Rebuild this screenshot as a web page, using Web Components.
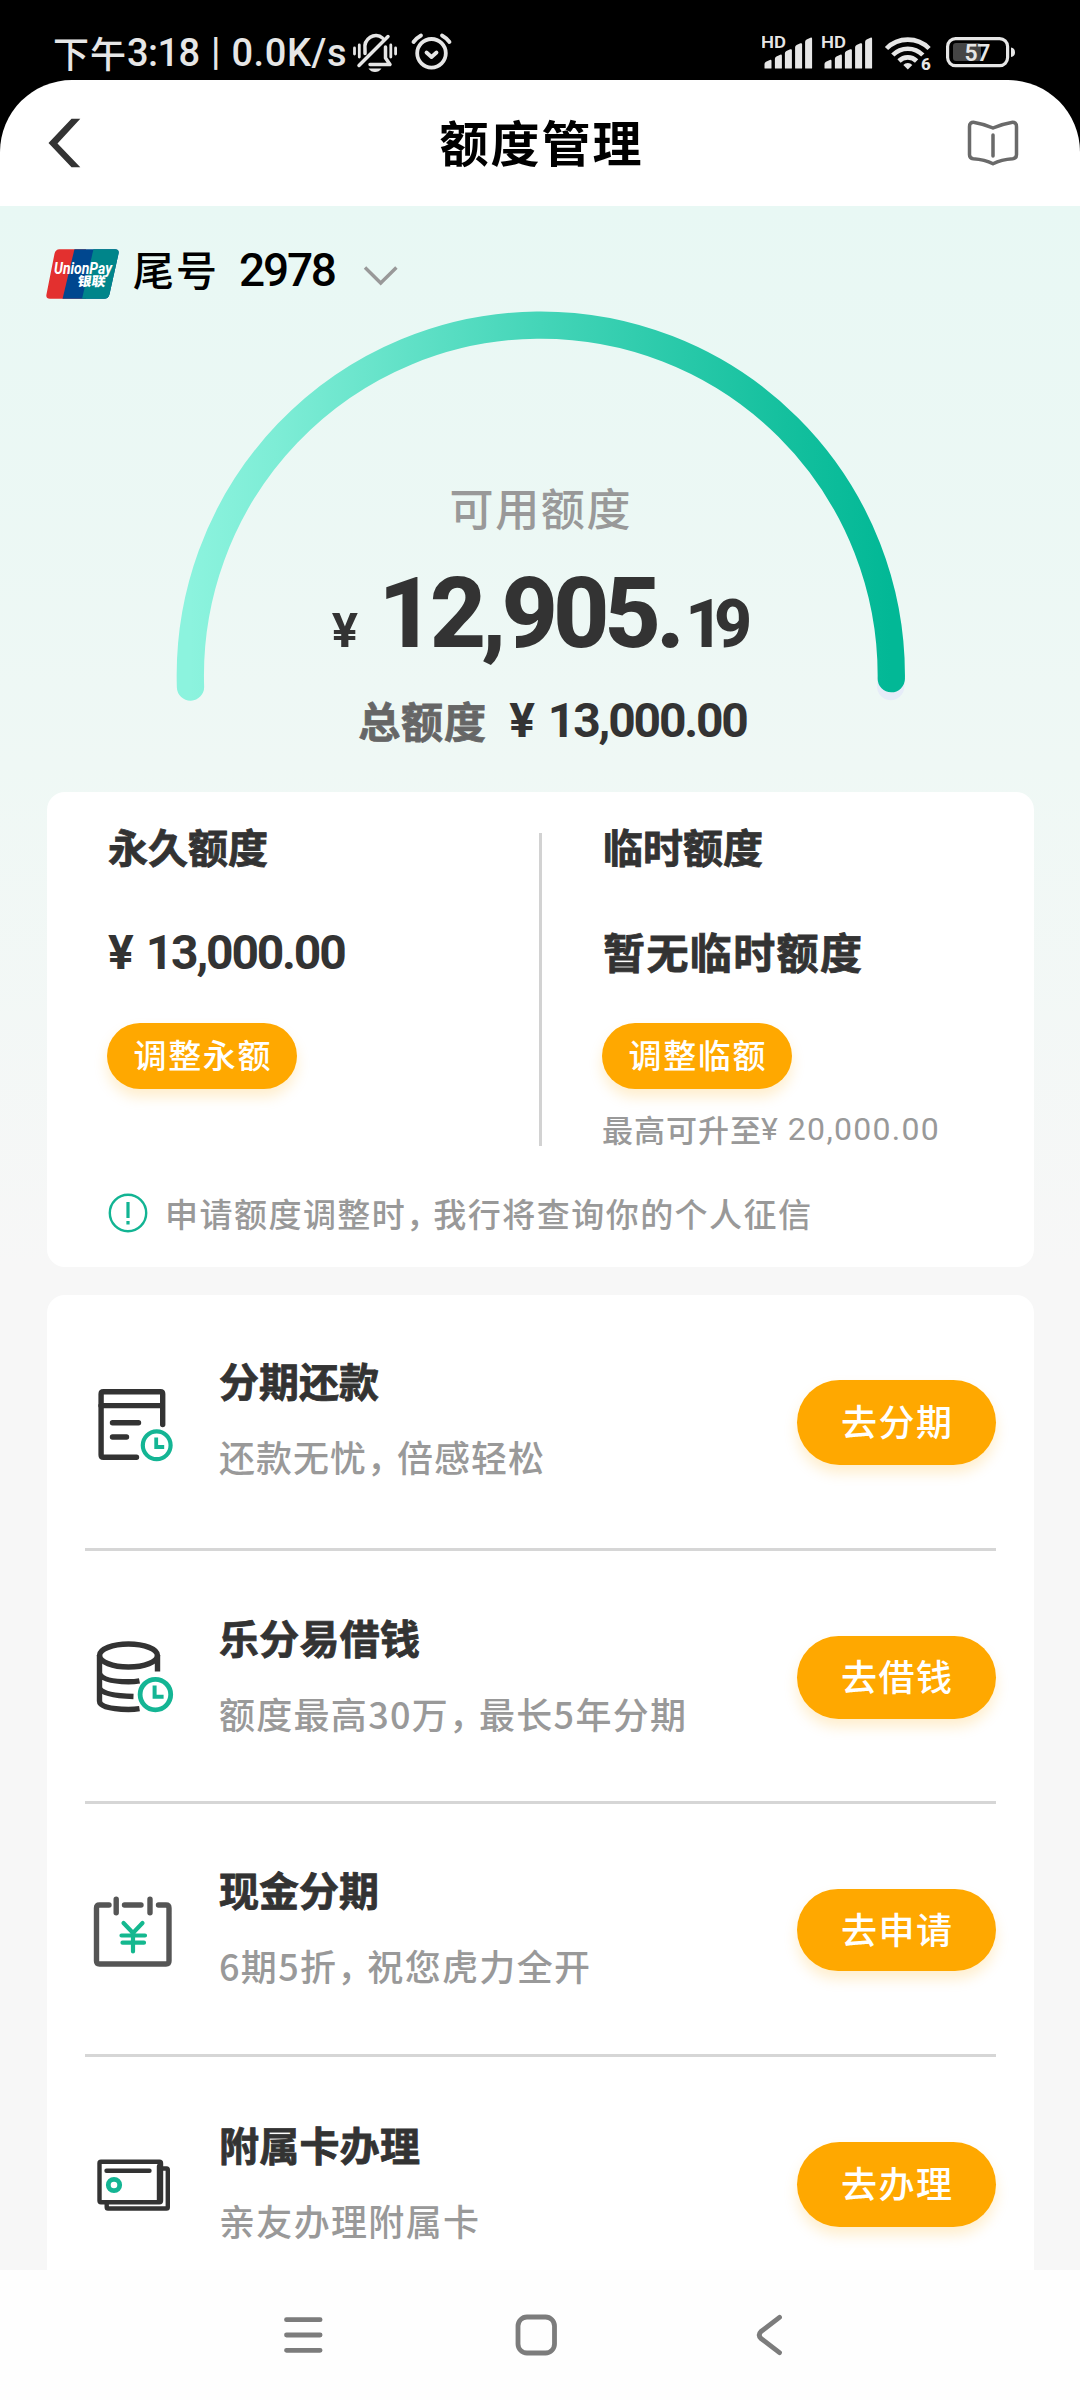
<!DOCTYPE html>
<html lang="zh-CN">
<head>
<meta charset="utf-8">
<title>额度管理</title>
<style>
html,body{margin:0;padding:0;background:#fff}
body{width:1080px;height:2400px;overflow:hidden;font-family:Roboto,"Noto Sans CJK SC",sans-serif;color:#333}
</style>
</head>
<body>
<limit-page></limit-page>
<script>
const CJK = '"Noto Sans CJK SC",sans-serif';
const NUM = 'Roboto,"Noto Sans CJK SC",sans-serif';
const pendingFit = [];

function define(name, css, html) {
  customElements.define(name, class extends HTMLElement {
    constructor() {
      super();
      const root = this.attachShadow({ mode: 'open' });
      root.innerHTML = `<style>:host{display:block;box-sizing:border-box}*{box-sizing:border-box}svg{display:block;flex:none}.k{letter-spacing:-6px}${css}</style>` +
        (typeof html === 'function' ? html(this) : html);
    }
  });
}

/* Single line of text tracked out (or in) to the width given in "w". */
customElements.define('fit-text', class extends HTMLElement {
  constructor() {
    super();
    this.attachShadow({ mode: 'open' }).innerHTML =
      `<style>:host{display:block;white-space:pre;flex:none;width:max-content}:host([num]){font-family:${NUM}}:host(:not([num])){font-family:${CJK}}:host([heavy]){-webkit-text-stroke:.8px currentColor}</style><slot></slot>`;
    pendingFit.push(this);
  }
  fit() {
    const w = +this.getAttribute('w');
    if (!w) return;
    const natural = this.getBoundingClientRect().width;
    const n = [...this.textContent].length - this.querySelectorAll('.k').length;
    this.style.letterSpacing = ((w - natural) / Math.max(1, n - 1)).toFixed(3) + 'px';
    this.style.width = w + 'px';
  }
});

const bars = x => [[0,60],[10.4,54.7],[20.4,49.3],[30.6,43.3],[40.6,37.7]]
  .map(([d, t]) => `<path d="M${x+d} 68V${t+4}q0-1.5 1.5-2.2l3.8-1.8q1.7-.6 1.7 1V68q0 .5-.6.5h-5.8q-.6 0-.6-.5z"/>`).join('');

define('status-bar', `
  :host{height:80px;background:#000;color:#e6e6e6;display:flex;padding:0 54px 0 53px}
  .l{display:flex;height:106px;align-items:center;font-size:36px;font-weight:500;line-height:50px}
  .l fit-text[num]{font-size:38px;margin-top:-1px}
  text{font-family:${NUM};font-weight:600}`,
 `<div class="l"><fit-text w="73" style="margin-top:-3px">下午</fit-text><fit-text num w="73" style="margin-left:1px">3:18</fit-text><fit-text num style="margin:-3px 0 0 11px">|</fit-text><fit-text num w="115" style="margin-left:11px">0.0K/s</fit-text>
   <svg width="110" height="50" viewBox="350 28 110 50" fill="none" stroke="#e6e6e6" stroke-width="3.5" stroke-linecap="round" stroke-linejoin="round" style="margin-left:3px">
    <path d="M366 53.500V49.500a11 12 0 0 1 17.500-11.500M386.500 47v11l4.500 6.500H371M389 36.500L360 65.500"/><path d="M369.500 68.500h13q-2.500 3.500-6.500 3.500t-6.500-3.500z" fill="#e6e6e6" stroke="none"/>
    <path d="M355.500 48v6M360.300 45v12M391.800 45v12M396.600 48v6" stroke-width="2.800"/>
    <circle cx="432.500" cy="53.300" r="14.300" stroke-width="3.800"/><path d="M427.500 52.500l5 4.500 5-4.500" stroke-width="3.800"/><path d="M414.500 42q3-4 7.500-6.500M450.500 42q-3-4-7.500-6.500" stroke-width="3.800"/>
   </svg></div>
  <svg width="264" height="80" viewBox="762 0 264 80" fill="#e6e6e6" style="margin-left:auto">
   <text x="761" y="48" font-size="17" textLength="25" lengthAdjust="spacingAndGlyphs">HD</text><text x="821" y="48" font-size="17" textLength="25" lengthAdjust="spacingAndGlyphs">HD</text>
   ${bars(764.5)}${bars(824.5)}
   <g fill="none" stroke="#e6e6e6" stroke-width="4.600"><path d="M886.500 48.500a30 30 0 0 1 42.600 0"/><path d="M892.800 55a21 21 0 0 1 30 0"/><path d="M899 61a12.500 12.500 0 0 1 17.600 0"/></g>
   <path d="M903.300 65a6 6 0 0 1 9 0l-4.500 4.500z"/>
   <text x="921" y="70" font-size="17" style="font-weight:800" stroke="#000" stroke-width="3" paint-order="stroke">6</text>
   <rect x="953" y="43" width="28" height="18" rx="3" fill="#454545"/>
   <rect x="947.600" y="38.600" width="60" height="27" rx="8" fill="none" stroke="#e6e6e6" stroke-width="3.200"/>
   <path d="M1011 47.500q4 .5 4 4.800t-4 4.800z"/>
   <text x="964.500" y="61" font-size="23" textLength="26">57</text>
  </svg>`);

define('app-header', `
  :host{height:126px;background:#000}
  .in{height:126px;background:#fff;border-radius:72px 72px 0 0;display:flex;justify-content:space-between;align-items:center;padding:0 61px 0 48px}
  fit-text{font-size:49px;font-weight:700;line-height:60px;color:#000;margin:-5px 0 0 33px}`,
 `<div class="in"><svg width="33" height="50" viewBox="48 117 33 50"><path d="M71.500 117.700H80.300L57.500 142.500l22.800 23.800H71.500L48.500 142z" fill="#333"/></svg>
  <fit-text w="202">额度管理</fit-text>
  <svg width="52" height="48" viewBox="967 119 52 48" fill="none" stroke="#6a6a6a" stroke-width="3.500" stroke-linecap="round" stroke-linejoin="round"><path d="M993 128q-8.500-4-18.500-5.600-5-.6-5 4.300v28q0 3.600 3.800 4 11.500.8 19.700 5.100 8.200-4.300 19.700-5.100 3.800-.4 3.800-4v-28q0-4.900-5-4.300-10 1.600-18.500 5.600zM993 135v21"/></svg></div>`);

define('card-picker', `
  :host{height:104px;display:flex;align-items:flex-start;padding:43px 0 0 46px;color:#000}`,
 `<svg width="73" height="50" viewBox="46 249 73 50">
   <defs><clipPath id="c"><path d="M59.500 249.300H115q4.500 0 3.500 4.500l-9 40.500q-1 4.500-5.500 4.500H50q-4.500 0-3.500-4.500l8-40.500q1-4.500 5-4.500z"/></clipPath></defs>
   <g clip-path="url(#c)"><path d="M46 249h40v50H46z" fill="#e3302f"/><path d="M74.500 249H119v50H62.500z" fill="#00478f"/><path d="M93.500 249H120v50H82z" fill="#00858a"/></g>
   <text x="54" y="274" font-size="16" font-weight="700" font-style="italic" fill="#fff" textLength="58" lengthAdjust="spacingAndGlyphs" font-family='Roboto,sans-serif'>UnionPay</text>
   <text x="77" y="286.500" font-size="13" font-weight="900" fill="#fff" textLength="28" lengthAdjust="spacingAndGlyphs" font-family='"Noto Sans CJK SC"' transform="skewX(-8)" style="transform-origin:90px 287px">银联</text>
  </svg>
  <fit-text w="84" style="font-size:41px;font-weight:500;line-height:50px;margin:-6px 0 0 14px">尾号</fit-text>
  <fit-text num w="98" style="font-size:46px;font-weight:500;line-height:50px;margin:-4px 0 0 22px">2978</fit-text>
  <svg width="36" height="24" viewBox="362 264 36 24" style="margin:15px 0 0 25px" fill="none" stroke="#999" stroke-width="3.400"><path d="M365 267.500l15.700 15.500 15.700-15.500"/></svg>`);

define('limit-gauge', `
  :host{display:grid;height:482px;justify-items:center;align-items:start}
  svg,.t{grid-area:1/1}
  .t{width:1080px;display:flex;flex-direction:column;align-items:center;padding-top:170px}
  .label{font-size:44px;font-weight:500;color:#999;line-height:60px;margin-top:-3px}
  .amt{display:flex;align-items:baseline;height:110px;line-height:110px;font-weight:800;margin-top:22px;padding-left:4px;color:#333}
  .sum{display:flex;align-items:center;height:50px;line-height:50px;font-weight:700;margin-top:26px;padding-left:27px}`,
 `<svg width="732" height="396" viewBox="174 310 732 396" fill="none" stroke-width="27.300" stroke-linecap="round">
   <defs><linearGradient id="g" gradientUnits="userSpaceOnUse" x1="190" y1="0" x2="891" y2="0"><stop offset="0" stop-color="#8cf3de"/><stop offset=".12" stop-color="#7eedd6"/><stop offset=".5" stop-color="#44d5b8"/><stop offset=".85" stop-color="#14c09e"/><stop offset="1" stop-color="#02b896"/></linearGradient></defs>
   <path d="M890.700 686.500l.3-8" stroke="#e6ecf8"/>
   <path d="M190.500 687A350.500 350.500 0 1 1 891.300 678.700" stroke="url(#g)"/></svg>
  <div class="t"><fit-text class="label" w="181">可用额度</fit-text>
   <div class="amt"><fit-text num style="font-size:49px;font-weight:700">¥</fit-text><fit-text num w="307" style="font-size:98px;margin-left:20px">12,905.</fit-text><fit-text num w="67" style="font-size:66px">19</fit-text></div>
   <div class="sum"><fit-text heavy w="128" style="font-size:42px;color:#666">总额度</fit-text><fit-text num style="font-size:48px;margin:2px 0 0 23px">¥</fit-text><fit-text num w="201" style="font-size:48px;margin:2px 0 0 13px">13,000.00</fit-text></div>
  </div>`);

define('pill-button', `
  :host{display:flex;align-items:center;justify-content:center;flex:none;background:#ffa800;color:#fff;border-radius:43px;box-shadow:0 8px 14px rgba(255,168,0,.2);font-weight:500}`,
 `<slot></slot>`);

define('limit-column', `
  :host{width:430px;line-height:50px;font-weight:700}
  .title{font-size:40px}
  .v{display:flex;height:50px;margin:55px 0 47px}
  pill-button{width:190px;height:66px;font-size:33px;margin-left:-1px}
  .n{display:flex;align-items:center;height:42px;line-height:42px;margin-top:19px;font-weight:500;color:#999}`,
 `<fit-text heavy class="title" w="160"><slot name="title"></slot></fit-text>
  <div class="v"><slot name="value"></slot></div>
  <pill-button><slot name="action"></slot></pill-button>
  <div class="n"><slot name="note"></slot></div>`);

define('limit-card', `
  :host{width:987px;height:475px;margin-left:47px;border-radius:18px;background:#fff;padding:29px 0 0 61px}
  .cols{display:flex;height:330px}
  .d{width:3px;height:313px;background:#d2d2d2;margin:12px 61px 0 1px}
  .tip{display:flex;align-items:center;height:50px;margin-top:37px;font-size:33px;line-height:50px;color:#999;font-weight:500}
  .tip fit-text{margin:0 0 0 17px}`,
 `<div class="cols">
   <limit-column><fit-text heavy slot="title" w="160">永久额度</fit-text><fit-text num slot="value" style="font-size:48px;margin-top:2px">¥</fit-text><fit-text num slot="value" w="201" style="font-size:48px;margin:2px 0 0 12px">13,000.00</fit-text><fit-text slot="action" w="137" style="margin-top:-4px">调整永额</fit-text></limit-column>
   <div class="d"></div>
   <limit-column><fit-text heavy slot="title" w="160">临时额度</fit-text><fit-text heavy slot="value" w="259" style="font-size:42px">暂无临时额度</fit-text><fit-text slot="action" w="137" style="margin-top:-4px">调整临额</fit-text>
    <fit-text slot="note" w="159" style="font-size:31px;margin-left:-1px">最高可升至</fit-text><fit-text num slot="note" style="font-size:32px;font-weight:400">¥</fit-text><fit-text num slot="note" w="151" style="font-size:32px;margin-left:10px;font-weight:400">20,000.00</fit-text></limit-column>
  </div>
  <div class="tip"><svg width="40" height="40" viewBox="0 0 40 40" fill="none" stroke="#12b493"><circle cx="20" cy="20" r="18.200" stroke-width="2.400"/><path d="M20 9v16M20 28v3.500" stroke-width="3.200"/></svg>
   <fit-text w="646">申请额度调整时<span class="k">，</span>我行将查询你的个人征信</fit-text></div>`);

const icons = {
 bill: `<svg width="88" height="88" viewBox="92 1380 88 88" fill="none" stroke="#333" stroke-width="5.400" stroke-linecap="round"><path d="M162.700 1424.500V1394q0-2.300-2.300-2.300H103.400q-2.300 0-2.300 2.300v61q0 2.300 2.300 2.300H136.500" /><path d="M101 1405.600h61M112.500 1422.800h26M112.500 1437h14"/><circle cx="156.700" cy="1445.300" r="13.900" stroke="#14b594" stroke-width="4.200"/><path d="M156.200 1437.500v9.500h8" stroke="#14b594" stroke-width="3.800" stroke-linecap="butt"/></svg>`,
 coins: `<svg width="88" height="88" viewBox="92 1635 88 88" fill="none" stroke="#333" stroke-width="5.400"><ellipse cx="128.500" cy="1655.500" rx="29" ry="11.500"/><path d="M99.500 1655v46q0 8 29 8.500 6 0 11-.8M157.500 1655v16.500M99.500 1673q2 8.500 29 8.800 6 0 11-1M99.500 1688q3 7.500 34 8.500"/><circle cx="155.400" cy="1694.600" r="15.300" stroke="#14b594" stroke-width="4.800"/><path d="M154.600 1685.500v11.200h9" stroke="#14b594" stroke-width="4"/></svg>`,
 cash: `<svg width="88" height="88" viewBox="92 1890 88 88" fill="none" stroke="#555" stroke-width="5.400" stroke-linecap="round"><path d="M109 1905H99.500q-3 0-3 3v53q0 3 3 3h66.500q3 0 3-3v-53q0-3-3-3h-7.500M124.500 1905H141M116.200 1899.300v13.500M150 1899.300v13.500"/><g stroke="#14b88f" stroke-width="4.200"><path d="M123.500 1923l9.500 10 9.500-10M133 1933v18.500M121.500 1935.500h23.500M122.500 1942.700h21.500"/></g></svg>`,
 cards: `<svg width="88" height="88" viewBox="92 2142 88 88" fill="none" stroke="#333" stroke-width="4.400" stroke-linecap="round" stroke-linejoin="round"><rect x="99.500" y="2161.800" width="61.500" height="40.500" rx="1.500"/><path d="M161 2168.500h5.500q1.300 0 1.300 1.300v37.400q0 1.300-1.300 1.300h-58.500q-1.300 0-1.300-1.300v-4M159 2166v35M106.500 2170.700h43"/><circle cx="114" cy="2185" r="5.700" stroke="#14b594" stroke-width="4.800"/></svg>`
};

define('service-row', `
  :host{height:var(--h,253px);display:flex;align-items:flex-start;margin-left:38px;width:911px;border-bottom:3px solid #d6d6d6;padding-left:7px}
  :host([last]){border:0}
  .i{width:88px;padding-top:var(--icon)}
  .t{flex:1;padding:var(--top) 0 0 39px}
  .a{font-size:40px;font-weight:700;line-height:50px}
  .b{font-size:36px;font-weight:500;line-height:50px;color:#999;margin-top:26px}
  pill-button{width:199px;height:var(--bh,84px);margin-top:var(--bt);font-size:36px;line-height:50px}`,
 el => `<div class="i">${icons[el.getAttribute('icon')]}</div>
  <div class="t"><div class="a"><slot name="a"></slot></div><div class="b"><slot name="b"></slot></div></div>
  <pill-button><slot name="go"></slot></pill-button>`);

define('service-card', `
  :host{width:987px;height:975px;margin:28px 0 0 47px;background:#fff;border-radius:18px 18px 0 0;overflow:hidden}
  .go{margin-top:-5px}`,
 `<service-row icon="bill" style="--h:256px;--icon:85px;--top:60px;--bt:85px;--bh:85px"><fit-text heavy slot="a" w="160">分期还款</fit-text><fit-text slot="b" w="325">还款无忧<span class="k">，</span>倍感轻松</fit-text><fit-text class="go" slot="go" w="111">去分期</fit-text></service-row>
  <service-row icon="coins" style="--icon:84px;--top:61px;--bt:85px;--bh:83px"><fit-text heavy slot="a" w="201">乐分易借钱</fit-text><fit-text slot="b" w="467">额度最高30万<span class="k">，</span>最长5年分期</fit-text><fit-text class="go" slot="go" w="111">去借钱</fit-text></service-row>
  <service-row icon="cash" style="--icon:86px;--top:60px;--bt:85px;--bh:82px"><fit-text heavy slot="a" w="160">现金分期</fit-text><fit-text slot="b" w="371">6期5折<span class="k">，</span>祝您虎力全开</fit-text><fit-text class="go" slot="go" w="111">去申请</fit-text></service-row>
  <service-row last icon="cards" style="--icon:85px;--top:62px;--bt:85px;--bh:85px"><fit-text heavy slot="a" w="201">附属卡办理</fit-text><fit-text slot="b" w="260">亲友办理附属卡</fit-text><fit-text class="go" slot="go" w="111">去办理</fit-text></service-row>`);

define('system-nav', `
  :host{height:130px;background:#fefefe;display:flex;padding:40px 0 0 281px}`,
 `<svg width="506" height="50" viewBox="281 2310 506 50" fill="none" stroke="#7c7c7c" stroke-width="4.800" stroke-linecap="round" stroke-linejoin="round"><path d="M286.500 2319.700h33.600M286.500 2335h33.600M286.500 2350.300h33.600"/><rect x="518" y="2317" width="36.500" height="36" rx="9"/><path d="M779.500 2317.300l-18.500 14.200q-3.500 3.500 0 7l18.500 14.200"/></svg>`);

define('limit-page', `
  :host{width:1080px;height:2400px;display:flex;flex-direction:column}
  main{height:2064px;overflow:hidden;background:linear-gradient(#e8f8f4 0,#eff8f5 560px,#f7f7f7 1060px)}`,
 `<status-bar></status-bar><app-header></app-header>
  <main><card-picker></card-picker><limit-gauge></limit-gauge><limit-card></limit-card><service-card></service-card></main>
  <system-nav></system-nav>`);

pendingFit.forEach(el => el.fit());
</script>
</body>
</html>
